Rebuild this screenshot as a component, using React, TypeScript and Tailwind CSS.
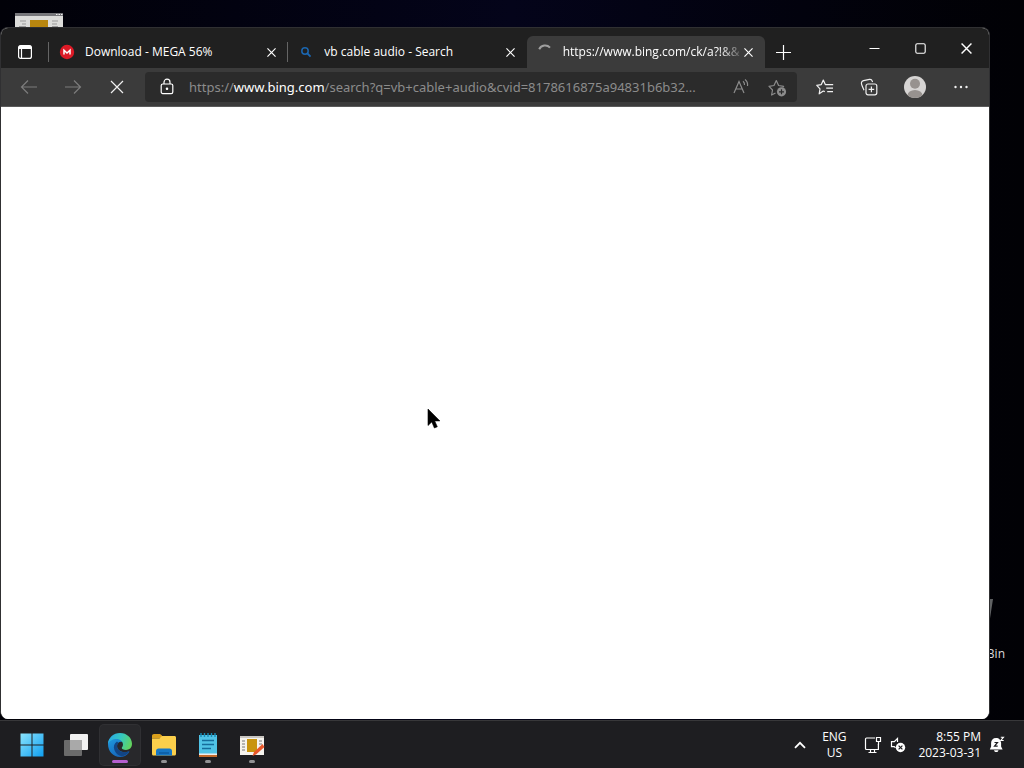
import React from "react";

type TabProps = {
  title: string;
  icon: React.ReactNode;
  active?: boolean;
};

const CloseIcon = ({ size = 9 }: { size?: number }) => (
  <svg width={size} height={size} viewBox="0 0 10 10" stroke="currentColor" strokeWidth="1.3" fill="none">
    <path d="M.5.5l9 9M9.5.5l-9 9" />
  </svg>
);

const MegaIcon = () => (
  <svg width="16" height="16" viewBox="0 0 16 16">
    <circle cx="8" cy="8" r="7.2" fill="#dc1a26" />
    <path d="M5 10.600V6.200L8 9l3-2.800v4.400" fill="none" stroke="#fff" strokeWidth="1.500" />
  </svg>
);

const SearchIcon = () => (
  <svg width="16" height="16" viewBox="0 0 16 16" fill="none" stroke="#1b66b0" strokeWidth="1.5">
    <circle cx="7" cy="7" r="3.2" />
    <path d="M9.5 9.5l3 3.100" strokeWidth="1.800" />
  </svg>
);

const SpinnerIcon = () => (
  <svg width="16" height="16" viewBox="0 0 16 16" fill="none" stroke="#a0a0a0" strokeWidth="2">
    <path d="M2.2 5.2A6.6 6.6 0 0 1 13 3.6" />
  </svg>
);

const Tab = ({ title, icon, active }: TabProps) => (
  <div
    className={`flex h-8 min-w-0 flex-1 items-center pl-2.5 pr-2 ${active ? "rounded-t-md bg-[#3b3b3b]" : ""}`}
  >
    <button className="flex min-w-0 flex-1 items-center text-left">
      <span className="mr-2.5 shrink-0">{icon}</span>
      <span
        className={`flex-1 overflow-hidden whitespace-nowrap text-xs leading-4 ${
          active ? "[mask-image:linear-gradient(to_right,black_88%,transparent_102%)]" : ""
        }`}
      >
        {title}
      </span>
    </button>
    <button aria-label={`Close ${title}`} className="flex size-4 shrink-0 items-center justify-center">
      <CloseIcon />
    </button>
  </div>
);

const TitleBar = () => (
  <div className="flex h-10 items-end bg-[#202020]">
    <button aria-label="Tab actions" className="flex h-8 w-[47px] shrink-0 items-center justify-center">
      <svg width="16" height="16" viewBox="0 0 16 16" fill="none" stroke="currentColor" strokeWidth="1.2">
        <rect x="1.6" y="1.6" width="12.8" height="12.8" rx="2" />
        <path d="M4.5 5v9.4" />
        <path d="M2 3.4h12" strokeWidth="3.4" />
      </svg>
    </button>
    <div className="flex min-w-0 max-w-[717px] flex-1 items-center">
      <span className="h-5 w-px shrink-0 bg-[#656565]" />
      <Tab title="Download - MEGA 56%" icon={<MegaIcon />} />
      <span className="h-5 w-px shrink-0 bg-[#656565]" />
      <Tab title="vb cable audio - Search" icon={<SearchIcon />} />
      <Tab title="https://www.bing.com/ck/a?!&&" icon={<SpinnerIcon />} active />
    </div>
    <button aria-label="New tab" className="flex h-8 w-9 shrink-0 items-center justify-center">
      <svg width="15" height="15" viewBox="0 0 15 15" stroke="currentColor" strokeWidth="1.2">
        <path d="M7.5 0v15M0 7.5h15" />
      </svg>
    </button>
    <div className="ml-auto flex self-stretch">
      <button aria-label="Minimize" className="flex w-[46px] items-center justify-center">
        <svg width="11" height="11" viewBox="0 0 11 11" stroke="currentColor">
          <path d="M.5 5.5h10" />
        </svg>
      </button>
      <button aria-label="Maximize" className="flex w-[46px] items-center justify-center">
        <svg width="11" height="11" viewBox="0 0 11 11" stroke="currentColor" strokeWidth="1.1" fill="none">
          <rect x=".8" y=".8" width="9.4" height="9.4" rx="1.4" />
        </svg>
      </button>
      <button aria-label="Close window" className="flex w-[46px] items-center justify-center">
        <CloseIcon size={11} />
      </button>
    </div>
  </div>
);

const ToolButton = ({ label, muted, children }: { label: string; muted?: boolean; children: React.ReactNode }) => (
  <button
    aria-label={label}
    className={`flex h-8 w-11 shrink-0 items-center justify-center ${muted ? "text-[#7c7c7c]" : "text-[#f0f0f0]"}`}
  >
    {children}
  </button>
);

const Toolbar = () => (
  <div className="flex h-[39px] items-center border-b border-[#5a5a5a] bg-[#3b3b3b] pl-1.5 pr-1.5">
    <ToolButton label="Back" muted>
      <svg width="18" height="16" viewBox="0 0 18 16" fill="none" stroke="currentColor" strokeWidth="1.2">
        <path d="M17 8H1.5M8 1.5L1.5 8 8 14.5" />
      </svg>
    </ToolButton>
    <ToolButton label="Forward" muted>
      <svg width="18" height="16" viewBox="0 0 18 16" fill="none" stroke="currentColor" strokeWidth="1.2">
        <path d="M1 8h15.5M10 1.5L16.5 8 10 14.5" />
      </svg>
    </ToolButton>
    <ToolButton label="Stop">
      <svg width="14" height="14" viewBox="0 0 14 14" fill="none" stroke="currentColor" strokeWidth="1.2">
        <path d="M1 1l12 12M13 1L1 13" />
      </svg>
    </ToolButton>
    <div className="relative ml-1.5 mr-1.5 flex h-[30px] min-w-0 flex-1 items-center rounded bg-[#2b2b2b] pl-3.5">
      <svg className="mr-3.5 shrink-0" width="16" height="18" viewBox="0 0 16 18" fill="none" stroke="#fff" strokeWidth="1.2">
        <rect x="2.2" y="6" width="11.6" height="9.6" rx="1.6" />
        <path d="M5 6V4.2a3 3 0 0 1 6 0V6" />
        <circle cx="8" cy="10.8" r=".7" fill="#fff" />
      </svg>
      <span className="flex-1 overflow-hidden whitespace-nowrap font-['Noto_Sans',sans-serif] text-[13px] leading-5 text-[#8c8c8c]">
        https://<span className="text-white">www.bing.com</span>/search?q=vb+cable+audio&amp;cvid=8178616875a94831b6b32...
      </span>
      <input aria-label="Address bar" className="absolute inset-y-0 left-11 right-20 bg-transparent text-[13px] outline-none" />
      <button aria-label="Read aloud" className="flex w-9 shrink-0 items-center justify-center text-[#8c8c8c]">
        <svg width="18" height="18" viewBox="0 0 18 18" fill="none" stroke="currentColor" strokeWidth="1.2">
          <path d="M2 15L7 3.500 12 15M3.800 11h6.400M11 3.200c1.200 1 1.700 2.200 1.500 3.800M13 1.500c2 1.500 2.900 3.800 2.500 6.500" />
        </svg>
      </button>
      <button aria-label="Add to favorites" className="mr-0.5 flex w-9 shrink-0 items-center justify-center text-[#8c8c8c]">
        <svg width="19" height="19" viewBox="0 0 19 19" fill="none" stroke="currentColor" strokeWidth="1.2" strokeLinejoin="round">
          <path d="M7.500 15l-3.900 2 .9-5L1 8.300l5-.8L8.300 2.500l2.300 5 5 .8-1 1" />
          <circle cx="13.500" cy="13.800" r="4.600" fill="currentColor" stroke="none" />
          <path d="M13.500 11.300v5M11 13.800h5" stroke="#2b2b2b" />
        </svg>
      </button>
    </div>
    <ToolButton label="Favorites">
      <svg width="18" height="18" viewBox="0 0 18 18" fill="none" stroke="currentColor" strokeWidth="1.2" strokeLinejoin="round">
        <path d="M8.800 13.600L7.300 13 3.200 15.800l.8-5L.8 7.300l4.500-.7L7.300 2l2 4.600h7.900M10.200 10.200H17M11.200 13.700H17" />
      </svg>
    </ToolButton>
    <ToolButton label="Collections">
      <svg width="18" height="18" viewBox="0 0 18 18" fill="none" stroke="currentColor" strokeWidth="1.2">
        <rect x="6" y="6" width="10.800" height="10.800" rx="2" />
        <path d="M11.400 8.600v5.600M8.600 11.400h5.600" />
        <path d="M4 12.300L2 7.500C1.500 6.300 1.300 5 1.500 4.300 1.800 3.300 2.600 2.800 3.500 2.600l6-1.200c1.300-.2 2.200.2 2.600 1.400l.5 1.200" />
      </svg>
    </ToolButton>
    <button aria-label="Profile" className="flex h-8 w-12 shrink-0 items-center justify-center">
      <svg width="24" height="24" viewBox="0 0 24 24">
        <clipPath id="avatar">
          <circle cx="12" cy="12" r="11" />
        </clipPath>
        <g clipPath="url(#avatar)">
          <rect width="24" height="24" fill="#d6d4d3" />
          <circle cx="12" cy="8.700" r="5" fill="#97928f" />
          <ellipse cx="12" cy="20.500" rx="7.500" ry="5.500" fill="#97928f" />
        </g>
      </svg>
    </button>
    <ToolButton label="Settings and more">
      <svg width="16" height="4" viewBox="0 0 16 4" fill="currentColor">
        <circle cx="2.500" cy="2" r="1.200" />
        <circle cx="8" cy="2" r="1.200" />
        <circle cx="13.500" cy="2" r="1.200" />
      </svg>
    </ToolButton>
  </div>
);

const StartIcon = () => (
  <svg width="24" height="24" viewBox="0 0 24 24">
    <defs>
      <linearGradient id="start" x1="0" y1="0" x2="1" y2="1">
        <stop offset="0" stopColor="#8be4fd" />
        <stop offset="1" stopColor="#0f9ff0" />
      </linearGradient>
    </defs>
    <path fill="url(#start)" d="M.5.5h11v11H.5zM12.500.5h11v11h-11zM.5 12.500h11v11H.5zM12.500 12.500h11v11h-11z" />
  </svg>
);

const TaskViewIcon = () => (
  <svg width="26" height="24" viewBox="0 0 26 24">
    <rect x="7" y="1" width="18" height="16" rx="1" fill="#f1f1f1" />
    <rect x="1" y="7" width="18" height="16" rx="1" fill="#6b6b6b" />
    <path d="M7 7h12v10H7z" fill="#a9a9a9" />
  </svg>
);

const EdgeIcon = () => (
  <svg width="26" height="26" viewBox="0 0 26 26">
    <defs>
      <linearGradient id="edgeTop" x1="0" y1=".3" x2="1" y2=".6">
        <stop offset="0" stopColor="#29a9e8" />
        <stop offset=".5" stopColor="#35c8bd" />
        <stop offset="1" stopColor="#64d35c" />
      </linearGradient>
      <linearGradient id="edgeLeft" x1="0" y1="0" x2=".6" y2="1">
        <stop offset="0" stopColor="#209fe2" />
        <stop offset="1" stopColor="#1564b9" />
      </linearGradient>
    </defs>
    <path fill="url(#edgeLeft)" d="M1 12c0-5 4-8 8-8 4 0 7 3 6.500 6-3-1-5.500 1-5.500 4 0 4 4.500 7.500 11.500 5.500.8-.2 1 .3.500.9C19.800 23.300 16.500 25 13 25 6.300 25 1 19.500 1 12z" />
    <path fill="#124585" d="M10 9.500c-3 2-3.800 5-2.600 8.500 1.100 3.300 4 5.700 7.400 6.300 3-.6 5.700-2.100 7.300-4.300.3-.5.100-.9-.5-.6-6.300 2.200-11.300-1-11.400-5 0-1.400.5-2.500 1.300-3.300z" />
    <path fill="url(#edgeTop)" d="M1 12C1.300 5.500 6.500 1 13 1c7 0 12 5 12 10.800 0 4.100-2.800 6.200-6 6.200-2.800 0-4.200-1.100-4.200-2 0-.7 1.200-1.300 1.200-3.400C16 9.500 13.300 7 9.500 7 5.500 7 2.200 9 1 12z" />
  </svg>
);

const FolderIcon = () => (
  <svg width="26" height="24" viewBox="0 0 26 24">
    <path d="M1 3C1 1.800 1.800 1 3 1h6l2 1.500v3H1z" fill="#d99f1c" />
    <path d="M1 5.500h7.500L11 3h12.500c.9 0 1.500.6 1.500 1.500v16.500c0 .9-.6 1.500-1.500 1.500h-21C1.600 22.500 1 21.900 1 21z" fill="#fbcf4b" />
    <path d="M5 22.500V18c0-1.500 1-2.500 2.500-2.500h11c1.500 0 2.500 1 2.500 2.500v4.500z" fill="#1677c5" />
    <path d="M8 20h10" stroke="#0d5ba1" strokeWidth="1.500" />
  </svg>
);

const NotepadIcon = () => (
  <svg width="20" height="26" viewBox="0 0 20 26">
    <path d="M1 3h18v21H1z" fill="#50c3e6" />
    <path d="M1 22h18v3H1z" fill="#c46b2c" />
    <path d="M1 21.500h18V23H1z" fill="#eee" />
    <path d="M4 8.500h12M4 12.500h12M4 16.500h9" stroke="#156c9b" strokeWidth="1.700" />
    <path d="M3 1v4M6.500 1v4M10 1v4M13.500 1v4M17 1v4" stroke="#178bb5" strokeWidth="1.400" />
  </svg>
);

const EditorIcon = () => (
  <svg width="26" height="24" viewBox="0 0 26 24">
    <path d="M1 3h24v19H1z" fill="#f5f3ee" />
    <path d="M1 3h24v2H1z" fill="#c9c6c1" />
    <path d="M8 6h10v13H8z" fill="#c8940f" />
    <path d="M3 8h3M3 11h3M3 14h3M3 17h3M20 8h3M20 11h3" stroke="#777" />
    <path d="M13.500 23l1.500-4L23.500 11l2 3-8.500 7.500z" fill="#e8572a" />
  </svg>
);

const apps = [
  { name: "Start", icon: <StartIcon /> },
  { name: "Task view", icon: <TaskViewIcon /> },
  { name: "Microsoft Edge", icon: <EdgeIcon />, active: true },
  { name: "File Explorer", icon: <FolderIcon />, running: true },
  { name: "Notepad", icon: <NotepadIcon />, running: true },
  { name: "Editor", icon: <EditorIcon />, running: true },
];

const Taskbar = () => (
  <div className="flex h-12 shrink-0 items-center border-t border-[#38383a] bg-[#1e1e21] pl-3 pr-[19px] text-white">
    <div className="flex gap-1">
      {apps.map((app) => (
        <button
          key={app.name}
          aria-label={app.name}
          className={`relative flex size-10 items-center justify-center rounded ${
            app.active ? "bg-[#28282b] ring-1 ring-[#303033]" : ""
          }`}
        >
          {app.icon}
          {app.active && <span className="absolute bottom-0.5 h-[3px] w-4 rounded-full bg-[#b65fd0]" />}
          {app.running && <span className="absolute bottom-0.5 h-[3px] w-1.5 rounded-full bg-[#929294]" />}
        </button>
      ))}
    </div>
    <div className="ml-auto flex items-center text-xs leading-4">
      <button aria-label="Show hidden icons" className="flex w-8 justify-center">
        <svg width="12" height="8" viewBox="0 0 12 8" fill="none" stroke="currentColor" strokeWidth="1.800">
          <path d="M1 6.800l5-5 5 5" />
        </svg>
      </button>
      <button className="w-9 text-center">
        ENG
        <br />
        US
      </button>
      <button aria-label="Network and volume" className="ml-3 flex items-center gap-2">
        <svg width="18" height="18" viewBox="0 0 18 18" fill="none" stroke="currentColor" strokeWidth="1.200">
          <path d="M11 2H2.500c-.6 0-1 .4-1 1v9.500c0 .6.400 1 1 1h11.900V8M4.500 16.500h8M6.500 13.500v3M10.500 13.500v3" />
          <path d="M12.500 1.500h4v4h-4zM14.500 5.500V9" />
        </svg>
        <svg width="16" height="16" viewBox="0 0 16 16" fill="none" stroke="currentColor" strokeWidth="1.200">
          <path d="M7.500 5V1.500L4.300 4.700H1.500v5h2.800l1.200 1.200" />
          <circle cx="10.500" cy="10.500" r="4.700" fill="currentColor" stroke="none" />
          <path d="M8.600 8.600l3.800 3.800M12.400 8.600l-3.800 3.800" stroke="#1e1e21" />
        </svg>
      </button>
      <button className="ml-3 text-right">
        8:55 PM
        <br />
        2023-03-31
      </button>
      <button aria-label="Notifications" className="ml-2">
        <svg width="16" height="17" viewBox="0 0 16 17">
          <path d="M7 2c-3 0-4.900 2-4.900 5v3.500L.8 13.500h12.800l-1.500-3V7c0-3-2.100-5-5.100-5z" fill="#fff" />
          <path d="M5 14.200h4.500c-.4 2.500-4.100 2.500-4.500 0z" fill="#fff" />
          <path d="M5.500 6.500h3l-3 3.700h3.200" fill="none" stroke="#1e1e21" strokeWidth="1.200" />
          <path d="M10.500 0H16v6h-4z" fill="#1e1e21" />
          <path d="M11.800 1.200h2.700l-2.700 3.300h2.900" fill="none" stroke="#fff" strokeWidth="1.100" />
        </svg>
      </button>
    </div>
  </div>
);

const App = () => {
  return (
    <div className="flex h-screen flex-col overflow-hidden bg-[#020208] font-['Open_Sans','Noto_Sans',sans-serif]">
      <div className="relative flex min-h-0 flex-1 flex-col bg-linear-to-r from-[#010108] via-[#04041a] to-[#010105] pb-px pr-[34px] pt-[27px]">
        {/* desktop shortcuts, partly behind the window */}
        <svg className="absolute left-[15px] top-[13px]" width="48" height="32" viewBox="0 0 48 32">
          <path d="M0 0h48v32H0z" fill="#dcdcda" />
          <path d="M0 0h48v3H0z" fill="#77777b" />
          <path d="M41 1.500h1.500M43.500 1.500H45M46 1.500h1.500" stroke="#eee" />
          <path d="M15 7h18v24H15z" fill="#b8860f" />
          <path d="M5 8h6M7 11h4M4 13.500h7M37 8h6M37 11h5M37 13.500h6" stroke="#999" />
        </svg>
        <div className="absolute bottom-[58px] right-[19px] flex flex-col items-center gap-4 text-xs leading-4 text-[#dcdcdc]">
          <svg width="38" height="32" viewBox="0 0 38 32">
            <path d="M1 2l37-1-4 26H5z" fill="#606264" />
          </svg>
          <span>Recycle Bin</span>
        </div>

        <div className="relative flex min-h-0 flex-1 flex-col overflow-hidden rounded-lg border border-b-0 border-[#303032] bg-white text-white">
          <TitleBar />
          <Toolbar />
          <main className="min-h-0 flex-1 bg-white" />
        </div>

        <svg className="absolute left-[427px] top-[408px]" width="14" height="22" viewBox="0 0 14 22">
          <path d="M1 1v16.500l3.800-3.600L7.400 20l2.900-1.200-2.600-5.900h5.200z" fill="#000" stroke="#000" strokeWidth=".6" />
        </svg>
      </div>
      <Taskbar />
    </div>
  );
};

export default App;
